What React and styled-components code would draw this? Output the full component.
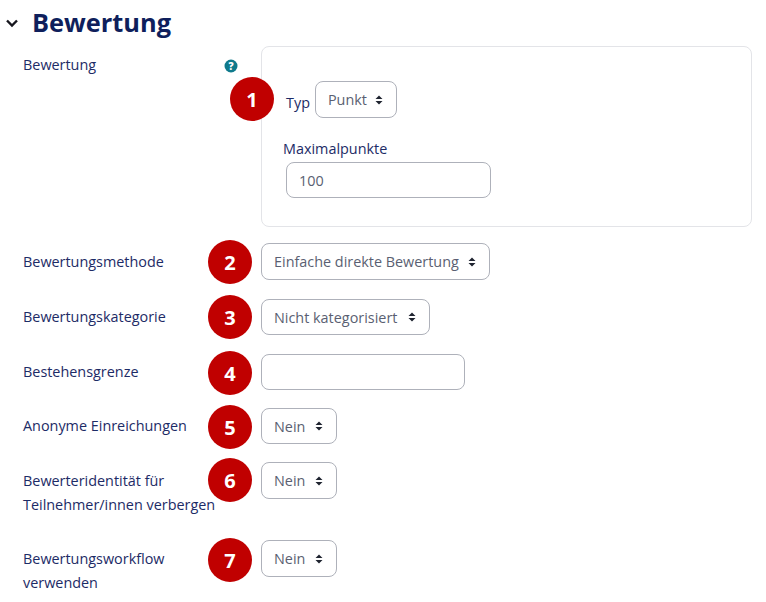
import React from 'react';
import styled, { createGlobalStyle } from 'styled-components';

const GlobalStyle = createGlobalStyle`
  html, body {
    margin: 0;
    padding: 0;
    background: #fff;
  }
  body {
    font-family: "Open Sans", "Noto Sans", "Liberation Sans", sans-serif;
    font-size: 14.4px;
    color: #1d2b66;
  }
`;

const Page = styled.div`
  width: 766px;
  height: 602px;
  overflow: hidden;
  padding: 5px 14px 0 23px;
  box-sizing: border-box;
`;
const Header = styled.div`
  display: flex;
  align-items: center;
  height: 36px;
  margin-left: -18px;
  gap: 13px;
`;
const Title = styled.h3`
  margin: -2px 0 0;
  font-size: 25.4px;
  line-height: 36px;
  font-weight: 700;
  color: #0f1f5c;
`;
const Row = styled.div`
  display: grid;
  grid-template-columns: 238px 1fr;
  height: ${props => props.height}px;
  padding-top: ${props => props.pad || 0}px;
`;
const Label = styled.div`
  font-size: 14.4px;
  line-height: 24px;
  padding-top: ${props => props.top || 7}px;
  color: #1d2b66;
  position: relative;
`;
const Help = styled.svg`
  position: absolute;
  left: 201px;
  top: 13px;
`;
const Control = styled.div`
  position: relative;
`;
const Badge = styled.div`
  position: absolute;
  left: ${props => props.left || -53}px;
  top: ${props => props.top}px;
  width: 44px;
  height: 44px;
  border-radius: 50%;
  background: #c00000;
  color: #fff;
  font-size: 20px;
  font-weight: 700;
  display: flex;
  align-items: center;
  justify-content: center;
  z-index: 2;
`;
const Box = styled.div`
  height: 181px;
  border: 1px solid #e3e4e8;
  border-radius: 8px;
  box-sizing: border-box;
  padding: 34px 0 0 24px;
`;
const TypeRow = styled.div`
  display: flex;
  align-items: flex-start;
  gap: 5px;
`;
const TypeLabel = styled.span`
  line-height: 24px;
  padding-top: 10px;
`;
const MaxLabel = styled.div`
  line-height: 24px;
  margin-top: 19px;
  margin-left: -3px;
`;
const Select = styled.div`
  display: inline-flex;
  align-items: center;
  justify-content: space-between;
  box-sizing: border-box;
  width: ${props => props.width}px;
  height: ${props => props.height || 37}px;
  padding: 0 13px 0 12px;
  border: 1.5px solid #aeb1ba;
  border-radius: 8px;
  color: #5a5f72;
  background: #fff;
  font-size: 14.4px;
`;
const Input = styled.div`
  box-sizing: border-box;
  width: ${props => props.width}px;
  height: 36px;
  line-height: 35px;
  padding: 0 12px;
  border: 1.5px solid #aeb1ba;
  border-radius: 8px;
  color: #5a5f72;
  font-size: 14.4px;
  margin-top: ${props => props.mt || 0}px;
`;

const Chevron = () => (
  <svg width="14" height="14" viewBox="0 0 14 14">
    <path d="M2 4.5 L7 9.5 L12 4.5" fill="none" stroke="#16161e" strokeWidth="2.4" />
  </svg>
);
const Caret = () => (
  <svg width="8" height="10" viewBox="0 0 8 10">
    <path d="M4 0.5 L7.5 4 H0.5 Z M0.5 6 H7.5 L4 9.5 Z" fill="#1f2430" />
  </svg>
);

const SelectBox = ({ width, height, children }) => (
  <Select width={width} height={height}>
    <span>{children}</span>
    <Caret />
  </Select>
);

export default function App() {
  return (
    <Page>
      <GlobalStyle />
      <Header>
        <Chevron />
        <Title>Bewertung</Title>
      </Header>
      <Row height={197} pad={5}>
        <Label>
          Bewertung
          <Help width="14" height="14" viewBox="0 0 14 14">
            <circle cx="7" cy="7" r="6.5" fill="#0f7a8c" />
            <text x="7" y="10.5" fontSize="10" fontWeight="800" textAnchor="middle" fill="#fff">?</text>
          </Help>
        </Label>
        <Control>
          <Badge left={-31} top={31}>1</Badge>
          <Box>
            <TypeRow>
              <TypeLabel>Typ</TypeLabel>
              <SelectBox width={82}>Punkt</SelectBox>
            </TypeRow>
            <MaxLabel>Maximalpunkte</MaxLabel>
            <Input width={205} mt={1}>100</Input>
          </Box>
        </Control>
      </Row>
      <Row height={56}>
        <Label>Bewertungsmethode</Label>
        <Control>
          <Badge top={-3}>2</Badge>
          <SelectBox width={229}>Einfache direkte Bewertung</SelectBox>
        </Control>
      </Row>
      <Row height={55}>
        <Label top={6}>Bewertungskategorie</Label>
        <Control>
          <Badge top={-4}>3</Badge>
          <SelectBox width={169} height={36}>Nicht kategorisiert</SelectBox>
        </Control>
      </Row>
      <Row height={54}>
        <Label top={6}>Bestehensgrenze</Label>
        <Control>
          <Badge top={-3}>4</Badge>
          <Input width={204} />
        </Control>
      </Row>
      <Row height={54}>
        <Label top={6}>Anonyme Einreichungen</Label>
        <Control>
          <Badge top={-3}>5</Badge>
          <SelectBox width={76} height={36}>Nein</SelectBox>
        </Control>
      </Row>
      <Row height={78}>
        <Label>Bewerteridentität für<br />Teilnehmer/innen verbergen</Label>
        <Control>
          <Badge top={-4}>6</Badge>
          <SelectBox width={76}>Nein</SelectBox>
        </Control>
      </Row>
      <Row height={62}>
        <Label>Bewertungsworkflow<br />verwenden</Label>
        <Control>
          <Badge top={-2}>7</Badge>
          <SelectBox width={76}>Nein</SelectBox>
        </Control>
      </Row>
    </Page>
  );
}
